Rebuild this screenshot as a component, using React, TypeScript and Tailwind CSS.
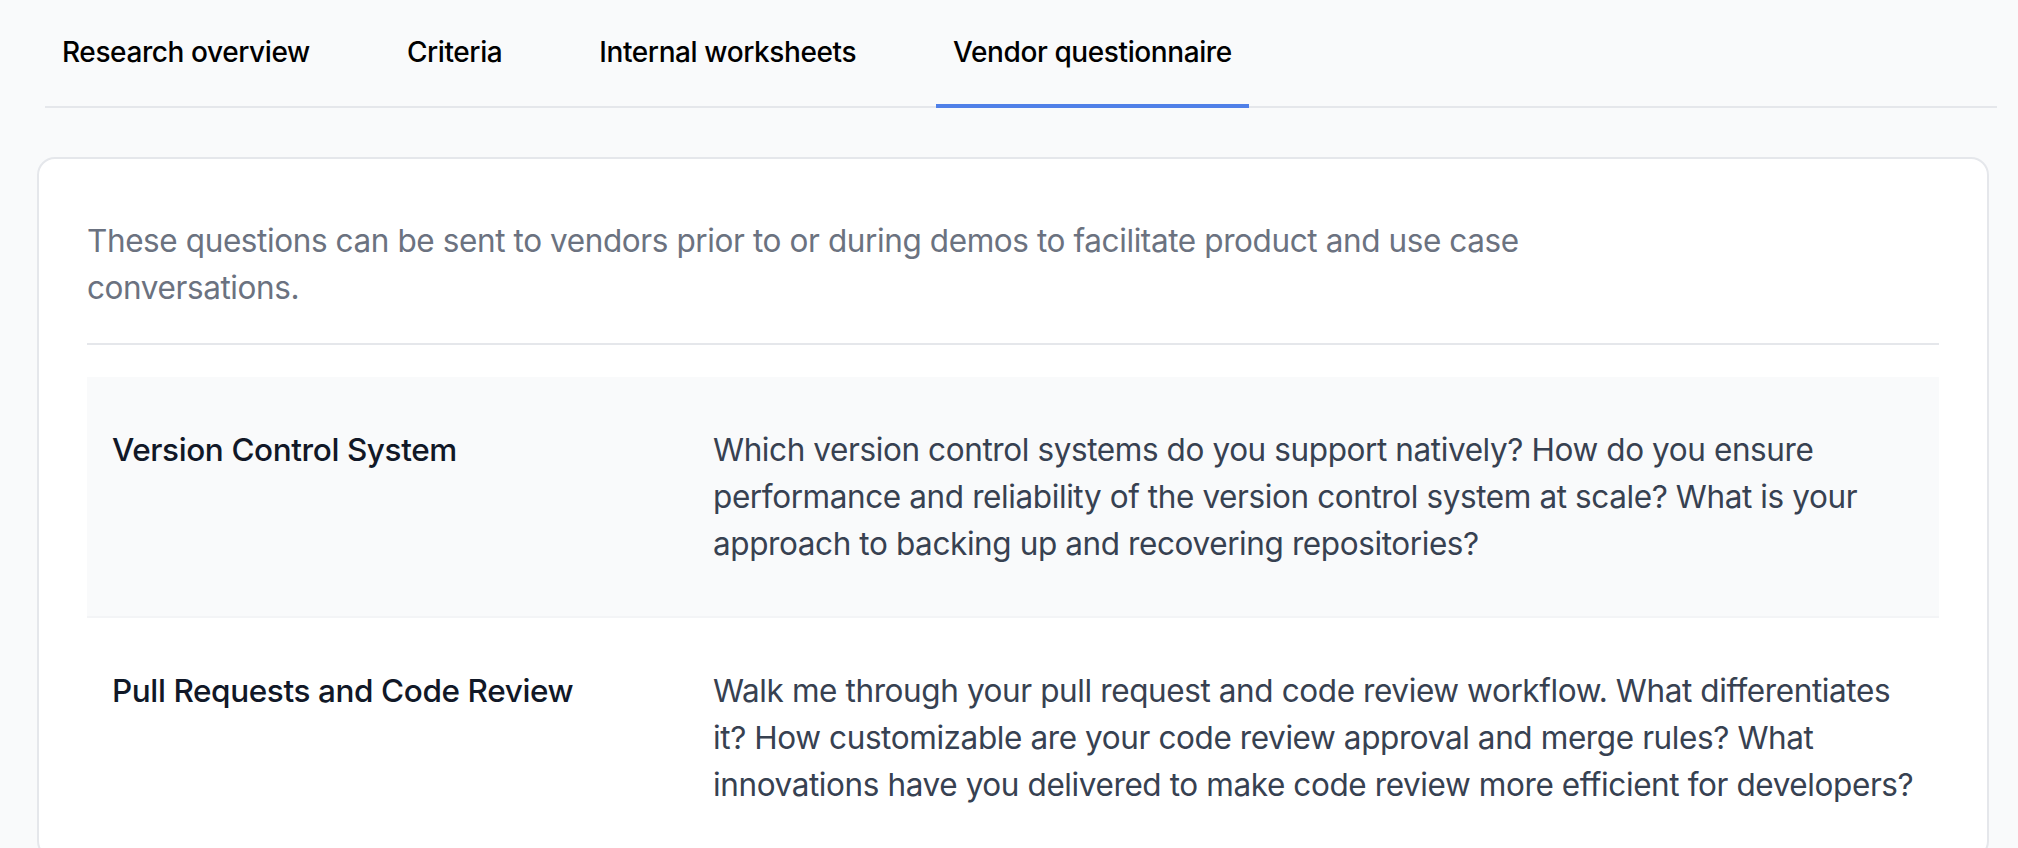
import React from 'react';

const tabs = ['Research overview', 'Criteria', 'Internal worksheets', 'Vendor questionnaire'];

const questions = [
  {
    title: 'Version Control System',
    body: 'Which version control systems do you support natively? How do you ensure performance and reliability of the version control system at scale? What is your approach to backing up and recovering repositories?',
    shaded: true,
  },
  {
    title: 'Pull Requests and Code Review',
    body: 'Walk me through your pull request and code review workflow. What differentiates it? How customizable are your code review approval and merge rules? What innovations have you delivered to make code review more efficient for developers?',
    shaded: false,
  },
];

export default function App() {
  const active = 3;
  return (
    <div
      className="w-full min-h-[848px] bg-[#f9fafb] overflow-hidden tracking-[-0.4px]"
      style={{ fontFamily: 'Inter, "Noto Sans", sans-serif' }}
    >
      {/* tabs */}
      <div className="ml-[45px] mr-[21px] flex gap-[63px] border-b-2 border-[#e5e7eb]">
        {tabs.map((t, i) => (
          <button
            key={t}
            className={`px-[17px] pt-[31px] pb-[31px] -mb-[2px] border-b-4 text-[28px] leading-[42px] font-medium text-black ${
              i === active ? 'border-[#5080e8]' : 'border-transparent'
            }`}
          >
            {t}
          </button>
        ))}
      </div>

      {/* questionnaire card */}
      <div className="ml-[37px] mr-[29px] mt-[49px] rounded-[18px] border-2 border-[#e5e7eb] bg-white px-[48px] pt-[58px]">
        <p className="max-w-[1560px] text-[31.5px] leading-[47px] text-[#6b7280]">
          These questions can be sent to vendors prior to or during demos to facilitate product and use case conversations.
        </p>
        <div className="mt-[32px] h-[2px] bg-[#e5e7eb]" />
        <div className="mt-[32px] flex flex-col divide-y-2 divide-[#f3f4f6]">
          {questions.map((q) => (
            <div
              key={q.title}
              className={`grid grid-cols-[601px_1fr] py-[49px] ${q.shaded ? 'bg-[#f9fafb]' : 'bg-white'}`}
            >
              <div className="px-[25px] text-[31.5px] leading-[47px] font-medium text-[#111827]">{q.title}</div>
              <div className="pl-[25px] pr-[25px] text-[31.5px] leading-[47px] text-[#374151]">{q.body}</div>
            </div>
          ))}
        </div>
      </div>
    </div>
  );
}
